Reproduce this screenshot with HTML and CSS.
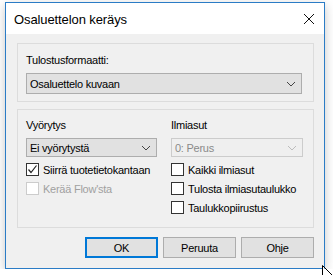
FILE: index.html
```html
<!DOCTYPE html>
<html lang="fi">
<head>
  <meta charset="UTF-8">
  <title>Osaluettelon keräys</title>
  <link rel="stylesheet" href="styles.css">
</head>
<body>

<div class="window">
  <div class="titlebar">
    <span class="title">Osaluettelon keräys</span>
    <svg class="close" width="12" height="12" viewBox="0 0 12 12">
      <path d="M1 1 L11 11 M11 1 L1 11" stroke="#111" stroke-width="1" fill="none"/>
    </svg>
  </div>

  <div class="client">
    <div class="group group-format">
      <div class="label">Tulostusformaatti:</div>
      <div class="combo combo-wide">
        <span class="combo-text">Osaluettelo kuvaan</span>
        <svg class="chevron" width="10" height="6" viewBox="0 0 10 6">
          <path d="M1 1 L5 5 L9 1" stroke="#444" stroke-width="1" fill="none"/>
        </svg>
      </div>
    </div>

    <div class="group group-options">
      <div class="col">
        <div class="label">Vyörytys</div>
        <div class="combo combo-small">
          <span class="combo-text">Ei vyörytystä</span>
          <svg class="chevron" width="10" height="6" viewBox="0 0 10 6">
            <path d="M1 1 L5 5 L9 1" stroke="#444" stroke-width="1" fill="none"/>
          </svg>
        </div>
        <div class="check">
          <span class="box">
            <svg width="11" height="11" viewBox="0 0 11 11">
              <path d="M1.5 5.5 L4 8.5 L9.5 1.5" stroke="#222" stroke-width="1.2" fill="none"/>
            </svg>
          </span>
          <span>Siirrä tuotetietokantaan</span>
        </div>
        <div class="check disabled">
          <span class="box"></span>
          <span>Kerää Flow'sta</span>
        </div>
      </div>

      <div class="col">
        <div class="label">Ilmiasut</div>
        <div class="combo combo-small combo-disabled">
          <span class="combo-text">0: Perus</span>
          <svg class="chevron" width="10" height="6" viewBox="0 0 10 6">
            <path d="M1 1 L5 5 L9 1" stroke="#bcbcbc" stroke-width="1" fill="none"/>
          </svg>
        </div>
        <div class="check">
          <span class="box"></span>
          <span>Kaikki ilmiasut</span>
        </div>
        <div class="check">
          <span class="box"></span>
          <span>Tulosta ilmiasutaulukko</span>
        </div>
        <div class="check">
          <span class="box"></span>
          <span>Taulukkopiirustus</span>
        </div>
      </div>
    </div>

    <div class="buttons">
      <button class="btn btn-default">OK</button>
      <button class="btn">Peruuta</button>
      <button class="btn">Ohje</button>
    </div>
  </div>
</div>

<svg class="cursor" width="14" height="14" viewBox="0 0 14 14">
  <path d="M0.5 0.5 L0.5 14 M0.5 0.5 L12 12" stroke="#000" stroke-width="1" fill="none"/>
  <path d="M1 2 L1 14 L10.5 12.5 Z" fill="#fff"/>
</svg>

</body>
</html>
```

FILE: styles.css
```css
html, body {
  margin: 0;
  padding: 0;
  background: #ffffff;
  font-family: 'Liberation Sans', Arial, sans-serif;
  font-size: 11px;
  letter-spacing: -0.25px;
  color: #000;
  overflow: hidden;
}

.window {
  margin: 2px 0 0 5px;
  width: 318px;
  height: 265px;
  border: 1px solid #2b7cc6;
  background: #f0f0f0;
  box-shadow: 0 3px 10px rgba(0, 0, 0, 0.22);
}

.titlebar {
  height: 31px;
  background: #fff;
  display: flex;
  align-items: center;
  justify-content: space-between;
  padding: 0 9px 0 8px;
}

.title {
  font-size: 13px;
  letter-spacing: -0.1px;
  padding-top: 2px;
}

.close {
  display: block;
}

.client {
  padding: 9px 0 0 11px;
}

.group {
  width: 297px;
  box-sizing: border-box;
  border: 1px solid #dcdcdc;
}

.group-format {
  height: 59px;
  padding: 9px 0 0 8px;
}

.group-options {
  height: 119px;
  margin-top: 7px;
  padding: 8px 0 0 8px;
  display: grid;
  grid-template-columns: 131px 132px;
  column-gap: 14px;
}

.label {
  height: 15px;
  line-height: 15px;
}

.combo {
  margin-top: 5px;
  box-sizing: border-box;
  border: 1px solid #adadad;
  background: #e1e1e1;
  display: flex;
  align-items: center;
  justify-content: space-between;
  padding: 0 5px 0 3px;
}

.combo-wide {
  width: 276px;
  height: 21px;
}

.combo-small {
  height: 19px;
}

.combo-disabled {
  border-color: #cccccc;
  background: #efefef;
  color: #8a8a8a;
}

.chevron {
  display: block;
}

.check {
  display: flex;
  align-items: center;
  height: 13px;
  margin-top: 6px;
}

.box {
  width: 13px;
  height: 13px;
  box-sizing: border-box;
  border: 1px solid #333;
  background: #fff;
  margin-right: 4px;
  display: flex;
  align-items: center;
  justify-content: center;
}

.check.disabled {
  color: #a0a0a0;
}

.check.disabled .box {
  border-color: #cccccc;
}

.buttons {
  width: 297px;
  margin-top: 9px;
  display: flex;
  justify-content: flex-end;
  gap: 5px;
}

.btn {
  width: 73px;
  height: 21px;
  box-sizing: border-box;
  border: 1px solid #adadad;
  background: #e1e1e1;
  font-family: inherit;
  font-size: 11px;
  letter-spacing: -0.25px;
  color: #000;
  padding: 0;
}

.btn-default {
  border: 2px solid #0078d7;
}

.cursor {
  position: absolute;
  left: 322px;
  top: 265px;
}
```
